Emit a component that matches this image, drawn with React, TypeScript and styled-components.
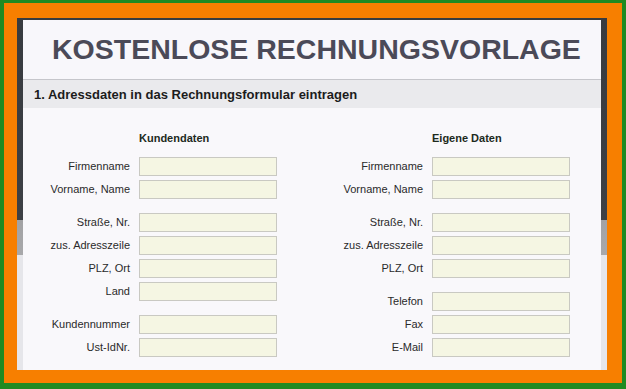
import React from "react"
import styled, { createGlobalStyle } from "styled-components"

const GlobalStyle = createGlobalStyle`
  html, body {
    margin: 0;
    padding: 0;
    background: #1f8a22;
    font-family: "Liberation Sans", Arial, Helvetica, sans-serif;
  }
`

const Page = styled.div`
  width: 626px;
  height: 389px;
  box-sizing: border-box;
  padding: 3px 4px 6px 4px;
`

const Orange = styled.div`
  height: 100%;
  box-sizing: border-box;
  background: #f77f00;
  padding: 15px 15px 13px 13px;
`

const Frame = styled.div`
  height: 100%;
  box-sizing: border-box;
  padding: 2px 6px 0 6px;
  background: linear-gradient(
    to bottom,
    #383b40 0,
    #3d4045 202px,
    #a2a2a4 202px,
    #a8a8aa 237px,
    #e6e6ea 237px
  );
`

const Panel = styled.div`
  height: 100%;
  background: #f9f8fb;
  display: flex;
  flex-direction: column;
`

const Header = styled.div`
  height: 60px;
  box-sizing: border-box;
  padding: 13px 0 0 29px;
  border-bottom: 1px solid #c6c6cb;
  background: #f8f7fb;
`

const Title = styled.h1`
  margin: 0;
  font-size: 28.5px;
  line-height: 32px;
  font-weight: bold;
  color: #4b4a58;
  white-space: nowrap;
`

const SectionBar = styled.div`
  height: 28px;
  line-height: 29px;
  padding-left: 11px;
  background: #eaeaed;
  font-size: 13px;
  font-weight: bold;
  color: #1c1c1c;
`

const Form = styled.div`
  display: flex;
  gap: 46px;
  padding: 23px 0 0 7px;
`

const Column = styled.div`
  display: flex;
  flex-direction: column;
  gap: 14px;
`

const Heading = styled.div`
  margin: 0 0 -2px 109px;
  font-size: 11px;
  line-height: 14px;
  font-weight: bold;
  color: #1d2a1d;
`

const Group = styled.div`
  display: grid;
  grid-template-columns: 100px 138px;
  column-gap: 9px;
  row-gap: 4px;
`

const Label = styled.label`
  font-size: 11px;
  line-height: 18px;
  color: #2a2a2a;
  text-align: right;
  white-space: nowrap;
`

const Input = styled.div`
  height: 19px;
  box-sizing: border-box;
  background: #f5f6e3;
  border: 1px solid #c9c9c2;
`

const customer = [
  ["Firmenname", "Vorname, Name"],
  ["Straße, Nr.", "zus. Adresszeile", "PLZ, Ort", "Land"],
  ["Kundennummer", "Ust-IdNr."],
]

const own = [
  ["Firmenname", "Vorname, Name"],
  ["Straße, Nr.", "zus. Adresszeile", "PLZ, Ort"],
  ["Telefon", "Fax", "E-Mail"],
]

const FieldColumn = ({ title, groups }: { title: string; groups: string[][] }) => (
  <Column>
    <Heading>{title}</Heading>
    {groups.map((group, i) => (
      <Group key={i}>
        {group.map((label) => (
          <React.Fragment key={label}>
            <Label>{label}</Label>
            <Input />
          </React.Fragment>
        ))}
      </Group>
    ))}
  </Column>
)

export default function App() {
  return (
    <>
      <GlobalStyle />
      <Page>
        <Orange>
          <Frame>
            <Panel>
              <Header>
                <Title>KOSTENLOSE RECHNUNGSVORLAGE</Title>
              </Header>
              <SectionBar>1. Adressdaten in das Rechnungsformular eintragen</SectionBar>
              <Form>
                <FieldColumn title="Kundendaten" groups={customer} />
                <FieldColumn title="Eigene Daten" groups={own} />
              </Form>
            </Panel>
          </Frame>
        </Orange>
      </Page>
    </>
  )
}
